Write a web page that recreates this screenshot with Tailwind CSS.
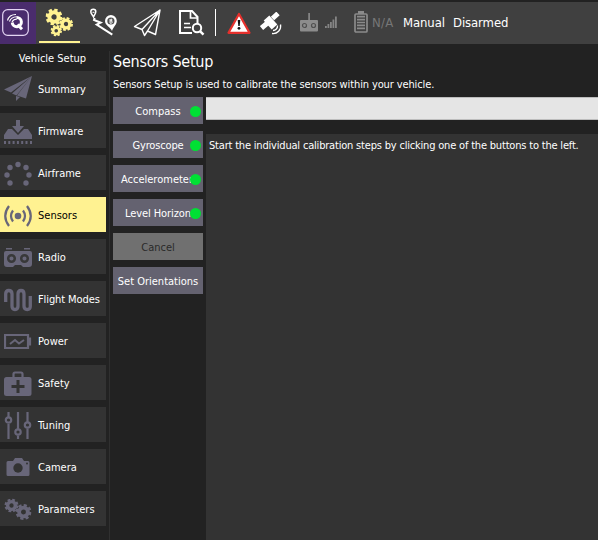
<!DOCTYPE html>
<html lang="en">
<head>
<meta charset="utf-8">
<title>Vehicle Setup</title>
<script src="https://cdn.jsdelivr.net/npm/@tailwindcss/browser@4"></script>
</head>
<body class="w-[598px] h-[540px] overflow-hidden bg-[#222] text-white font-['DejaVu_Sans_Condensed','DejaVu_Sans',sans-serif] text-[11px] leading-[14px] whitespace-nowrap">
<svg class="hidden">
  <symbol id="gear" viewBox="0 0 20 20"><circle cx="10" cy="10" r="5.5" fill="none" stroke="currentColor" stroke-width="4.8"/><circle cx="10" cy="10" r="8.4" fill="none" stroke="currentColor" stroke-width="3.2" stroke-dasharray="3.9 2.697"/></symbol>
</svg>
<div class="flex flex-col h-full pt-[2px]">
  <header class="flex h-[42px] shrink-0 bg-[#404040]">
    <div class="w-9 bg-[#4a2c6d] pt-[7px] pl-[2px]">
      <svg class="w-[27px] h-[27px]" viewBox="0 0 27 27" fill="none" stroke="#e4d5f4"><rect x=".7" y=".7" width="25.6" height="25.6" rx="5" stroke-width="1.2"/><path d="M14.500 8.500a4.600 4.600 0 1 1-4.300 5" stroke="#fff" stroke-width="3"/><path d="m15.500 15.500 4.500 4.800" stroke="#fff" stroke-width="3"/><path d="M5.500 11.500c1-4 4-6 8.500-6M7.500 12.500c1-3 3-4.600 7-4.800M10 13c1-2 2.500-3 5-3" stroke="#fff" stroke-width="1.100"/></svg>
    </div>
    <div class="ml-[3px] w-[41px] flex flex-col justify-between pt-[5px] pb-px">
      <svg class="w-[41px] h-[30px] text-[#fff291]" viewBox="0 0 41 30"><use href="#gear" x="6.500" y="1.500" width="17" height="17"/><use href="#gear" x="20" y="10" width="14" height="14"/><use href="#gear" x="11.500" y="18" width="11.500" height="11.500"/></svg>
      <div class="h-[2px] bg-[#fff291]"></div>
    </div>
    <svg class="ml-[8px] mt-[5px] w-[32px] h-[30px]" viewBox="0 0 32 30" fill="none" stroke="#fff"><path d="M6.700 11 6 13l6.700 2.700-4 2L24.300 27.700" stroke-width="2"/><path d="M5.500 10C4.500 8 2.800 6.500 2.800 4.700a2.500 2.500 0 0 1 5 0c0 1.800-1.500 3.300-2.300 5.300z" stroke-width="1.500"/><path d="M4.500 5.300h2" stroke-width="1"/><path d="M24 24c-1.500-4-7-5.500-7-10a5.900 5.900 0 0 1 11.800 0c0 3.500-3.500 6-4.800 10z" fill="#fff" stroke="none"/><circle cx="22.900" cy="14" r="3.600" fill="#505050" stroke="none"/><path d="M22 12v4.200h1.200a1.100 1.100 0 0 0 0-2.200H22m1 0a1 1 0 0 0 0-2z" stroke-width=".9"/></svg>
    <svg class="ml-[13px] mt-[7px] w-[29px] h-[28px]" viewBox="0 0 29 28" fill="none" stroke="#fff" stroke-width="1.400" stroke-linejoin="round"><path d="M27 1 1.500 17.500l7.500 3L27 1l-4.500 24.500-8-3.500L27 1M9 20.500l2.500 6 3-4.500L27 1"/></svg>
    <svg class="ml-[16px] mt-[7px] w-[28px] h-[27px]" viewBox="0 0 28 27" fill="none" stroke="#fff" stroke-width="2"><path d="M14 24H2V2h12l5.500 6v7"/><path d="M12.500 2v7h7" stroke-width="1.700"/><path d="M6 14.500h6M6 18.500h7" stroke-width="1.600"/><circle cx="19" cy="19" r="4.200"/><path d="m22 22.200 3.500 3.500" stroke-width="2.500"/></svg>
    <div class="ml-[9px] mt-[7px] w-px h-[27px] bg-white"></div>
    <svg class="ml-[11px] mt-[10px] w-[24px] h-[23px]" viewBox="0 0 24 23"><path d="M12 2 22.500 20.800h-21z" fill="#fff" stroke="#e5302c" stroke-width="2.200" stroke-linejoin="round"/><path d="M10.700 8h2.600l-.6 6h-1.400z" fill="#111"/><circle cx="12" cy="16.300" r="1.400" fill="#111"/></svg>
    <svg class="ml-[9px] mt-[10px] w-[23px] h-[23px]" viewBox="0 0 23 23" fill="none" stroke="#fff"><path d="m1.500 16 6-5M12.500 6.500l5.500-5" stroke-width="5"/><path d="m6.500 6 8 9" stroke-width="7.500"/><path d="M12.500 19.500a6 6 0 0 0 7-7" stroke="#404040" stroke-width="3.500"/><path d="M12 21.500a7.500 7.500 0 0 0 8.500-9M13 18.500a4.500 4.500 0 0 0 4.500-5" stroke-width="1.300"/></svg>
    <svg class="ml-[17px] mt-[11px] w-[18px] h-[19px]" viewBox="0 0 18 19" fill="#8c8c8c"><path d="M8.300 0h1.600v7H17q1 0 1 1v9.500q0 1-1 1H1q-1 0-1-1V8q0-1 1-1h7.300z"/><g stroke="#505050" stroke-width="1.200"><circle cx="4.500" cy="12.500" r="2"/><circle cx="13.500" cy="12.500" r="2"/></g></svg>
    <svg class="ml-[7px] mt-[14px] w-[12px] h-[12px]" viewBox="0 0 12 12" fill="#858585"><path d="M0 10h1.800v2H0zM2.500 8h1.800v4H2.500zM5 6h1.800v6H5zM7.500 3.500h1.800V12H7.500zM10 .5h1.800V12H10z"/></svg>
    <svg class="ml-[17px] mt-[9px] w-[14px] h-[22px]" viewBox="0 0 14 22" fill="none" stroke="#8b8b8b"><path d="M4 1.500h6" stroke-width="3"/><rect x="1" y="3" width="12" height="18" rx="1" stroke-width="1.700"/><path d="M3 5.700h8M3 8.600h8M3 11.500h8M3 14.400h8M3 17.300h8" stroke-width="1.700"/></svg>
    <span class="ml-[4px] mt-[13px] w-[31px] text-[13px] leading-4 text-[#777] tracking-[0.3px]">N/A</span>
    <span class="mt-[13px] w-[50px] text-[13px] leading-4 tracking-[-0.1px]">Manual</span>
    <span class="mt-[13px] text-[13px] leading-4 tracking-[-0.1px]">Disarmed</span>
  </header>
  <div class="flex flex-1 min-h-0">
    <nav class="w-[106px] shrink-0 pt-[7px] flex flex-col gap-[7px] text-[#686679]">
      <h2 class="text-center text-white h-[13px] pt-px pr-px">Vehicle Setup</h2>
      <a class="flex items-center h-[35px] bg-[#333] pl-[4px] gap-[6px]"><svg class="w-7 h-7" viewBox="0 0 28 28" fill="currentColor"><path d="M28 1 0 14.500l7 3zM28 1 8 18.500l4.500 2zM28 1 13 20.500l9 3zM12 21l4 1-4 4z"/></svg><span class="text-white pt-[2px]">Summary</span></a>
      <a class="flex items-center h-[35px] bg-[#333] pl-[4px] gap-[6px]"><svg class="w-7 h-7" viewBox="0 0 28 28" fill="currentColor"><path d="M12 3h4v6h4l-6 7-6-7h4zM4 12h4l6 6 6-6h4l4 6v4H0v-4zM0 24h2v3H0zm4.300 0h2v3h-2zm4.300 0h2v3h-2zm4.300 0h2v3h-2zm4.300 0h2v3h-2zm4.300 0h2v3h-2zM26 24h2v3h-2z"/></svg><span class="text-white pt-[2px]">Firmware</span></a>
      <a class="flex items-center h-[35px] bg-[#333] pl-[4px] gap-[6px]"><svg class="w-7 h-7" viewBox="0 0 28 28" fill="currentColor"><circle cx="14" cy="5.500" r="2.700"/><circle cx="6" cy="8.500" r="2.700"/><circle cx="22" cy="8.500" r="2.700"/><circle cx="3" cy="16" r="2.700"/><circle cx="25" cy="16" r="2.700"/><circle cx="6" cy="24" r="2.700"/><circle cx="22" cy="24" r="2.700"/></svg><span class="text-white pt-[2px]">Airframe</span></a>
      <a class="flex items-center h-[35px] bg-[#fff291] pl-[4px] gap-[6px]"><svg class="w-7 h-7" viewBox="0 0 28 28" fill="none" stroke="currentColor" stroke-width="2.200"><circle cx="14" cy="15" r="3.300" fill="currentColor" stroke="none"/><path d="M9 9.500q-4 5.500 0 11M19 9.500q4 5.500 0 11M5 5q-7.500 10 0 20M23 5q7.500 10 0 20"/></svg><span class="text-black pt-[2px]">Sensors</span></a>
      <a class="flex items-center h-[35px] bg-[#333] pl-[4px] gap-[6px]"><svg class="w-7 h-7" viewBox="0 0 28 28"><path d="M2 5h6v1.500H2zM20 5h6v1.500h-6zM2 8h24q2 0 2 2v11q0 3-3 3h-6l-2-2h-6l-2 2H3q-3 0-3-3V10q0-2 2-2z" fill="currentColor"/><g fill="none" stroke="#383839" stroke-width="2.500"><circle cx="7.500" cy="15.500" r="3.300"/><circle cx="20.500" cy="15.500" r="3.300"/></g></svg><span class="text-white pt-[2px]">Radio</span></a>
      <a class="flex items-center h-[35px] bg-[#333] pl-[4px] gap-[6px]"><svg class="w-7 h-7" viewBox="0 0 28 28" fill="none" stroke="currentColor" stroke-width="3.300"><path d="M1.700 17V9Q1.700 5.500 4.800 5.500T8 9V21Q8 24.500 11 24.500T14 21V9Q14 5.500 17 5.500T20 9V21Q20 24.500 23.200 24.500T26.300 21V11"/></svg><span class="text-white pt-[2px] tracking-[-0.1px]">Flight Modes</span></a>
      <a class="flex items-center h-[35px] bg-[#333] pl-[4px] gap-[6px]"><svg class="w-7 h-7" viewBox="0 0 28 28" fill="none" stroke="currentColor" stroke-width="2"><path d="M1 8h23v13H1zM26 10.500v8" stroke-width="2.200"/><path d="m6 17 5-4 4 3.500 5-3.500"/></svg><span class="text-white pt-[2px]">Power</span></a>
      <a class="flex items-center h-[35px] bg-[#333] pl-[4px] gap-[6px]"><svg class="w-7 h-7" viewBox="0 0 28 28"><rect y="8" width="27.500" height="19" rx="2.500" fill="currentColor"/><path d="M9.500 8V5q0-1.500 1.500-1.500h6q1.500 0 1.500 1.500v3" fill="none" stroke="currentColor" stroke-width="2.200"/><path d="M14 11v13M7.500 17.500h13" stroke="#333" stroke-width="3"/></svg><span class="text-white pt-[2px]">Safety</span></a>
      <a class="flex items-center h-[35px] bg-[#333] pl-[4px] gap-[6px]"><svg class="w-7 h-7" viewBox="0 0 28 28" fill="none" stroke="currentColor" stroke-width="2.200"><path d="M4.500 1v6m0 6v15M14 1v17.500m0 6V28M23.500 1v10.500m0 6V28"/><circle cx="4.500" cy="9" r="2.700"/><circle cx="14" cy="21" r="2.700"/><circle cx="23.500" cy="14" r="2.700"/></svg><span class="text-white pt-[2px]">Tuning</span></a>
      <a class="flex items-center h-[35px] bg-[#333] pl-[4px] gap-[6px]"><svg class="w-7 h-7" viewBox="0 0 28 28"><path d="M4 8h5l2-3h7l2 3h4q1.500 0 1.500 1.500v12q0 1.500-1.500 1.500H4q-1.500 0-1.500-1.500v-12Q2.500 8 4 8z" fill="currentColor"/><circle cx="14" cy="15" r="4.700" fill="#333"/><circle cx="23" cy="10.500" r="1" fill="#333"/></svg><span class="text-white pt-[2px]">Camera</span></a>
      <a class="flex items-center h-[35px] bg-[#333] pl-[4px] gap-[6px]"><svg class="w-7 h-7" viewBox="0 0 28 28"><use href="#gear" x="0" y="3.500" width="15" height="14"/><use href="#gear" x="11.500" y="9" width="16" height="16"/></svg><span class="text-white pt-[2px]">Parameters</span></a>
    </nav>
    <div class="ml-[3px] mt-[7px] w-px bg-[#303030]"></div>
    <main class="ml-[3px] flex-1 flex flex-col pt-[8px]">
      <h1 class="text-[16px] leading-[20px] h-[25px] tracking-[-0.25px]">Sensors Setup</h1>
      <p class="h-[20px] pt-px tracking-[-0.12px]">Sensors Setup is used to calibrate the sensors within your vehicle.</p>
      <div class="flex flex-1 gap-[3px]">
        <div class="w-[90px] flex flex-col gap-[7px]">
          <button class="relative h-[27px] pt-[2px] bg-[#646270]">Compass<i class="absolute right-[2px] top-[9px] size-[11px] rounded-full bg-[#00e034]"></i></button>
          <button class="relative h-[27px] pt-[2px] bg-[#646270] tracking-[-0.15px]">Gyroscope<i class="absolute right-[2px] top-[9px] size-[11px] rounded-full bg-[#00e034]"></i></button>
          <button class="relative h-[27px] pt-[2px] pr-[2px] bg-[#646270]">Accelerometer<i class="absolute right-[2px] top-[9px] size-[11px] rounded-full bg-[#00e034]"></i></button>
          <button class="relative h-[27px] pt-[2px] bg-[#646270] tracking-[-0.1px]">Level Horizon<i class="absolute right-[2px] top-[9px] size-[11px] rounded-full bg-[#00e034]"></i></button>
          <button class="h-[27px] pt-[2px] bg-[#707070] text-[#2a2a2a]">Cancel</button>
          <button class="h-[27px] pt-[2px] bg-[#646270]">Set Orientations</button>
        </div>
        <div class="flex-1 flex flex-col gap-[14px]">
          <div class="h-[23px] bg-[#e5e5e5] border-y border-[#bdbdbd]"></div>
          <div class="flex-1 bg-[#333] pl-[3px] pt-[5px] tracking-[-0.19px]">Start the individual calibration steps by clicking one of the buttons to the left.</div>
        </div>
      </div>
    </main>
  </div>
</div>
</body>
</html>
